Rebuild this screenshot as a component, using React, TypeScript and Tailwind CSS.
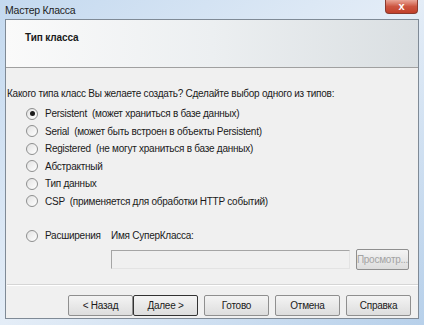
import React from 'react';

const FONT = { fontFamily: '"Liberation Sans", "Noto Sans", Arial, sans-serif' };

function Radio({ checked }: { checked?: boolean }) {
  return (
    <span className="inline-flex h-[12px] w-[12px] shrink-0 items-center justify-center rounded-full border border-[#8e8f8f] bg-gradient-to-br from-[#e2e2e2] to-[#ffffff]">
      {checked && <span className="h-[5px] w-[5px] rounded-full bg-[#1b1b1b]" />}
    </span>
  );
}

function Option({ label, note, checked }: { label: string; note?: string; checked?: boolean }) {
  return (
    <div className="flex h-[17.5px] items-center gap-[7px] pl-[19px]">
      <Radio checked={checked} />
      <span className="whitespace-pre">
        {label}
        {note && <span>{'  '}{note}</span>}
      </span>
    </div>
  );
}

function Btn({ children, focused, disabled, w = 'w-[65px]' }: { children: React.ReactNode; focused?: boolean; disabled?: boolean; w?: string }) {
  return (
    <button
      className={
        'flex h-[21px] shrink-0 items-center justify-center rounded-[2px] border bg-gradient-to-b from-[#f4f4f4] to-[#dddddd] ' +
        w +
        ' ' +
        (focused ? 'border-[#333333] ' : 'border-[#8f8f8f] ') +
        (disabled ? 'text-[#a3a3a3]' : 'text-[#1a1a1a]')
      }
    >
      {children}
    </button>
  );
}

export default function App() {
  return (
    <div
      className="flex h-[325px] w-[424px] flex-col overflow-hidden bg-gradient-to-br from-[#c4d9ef] via-[#e4edf7] to-[#b7d0ea] text-[10px] leading-[13px] tracking-[-0.25px] text-[#1a1a1a]"
      style={FONT}
    >
      {/* title bar */}
      <div className="flex h-[19px] shrink-0 items-start justify-between pl-[5px]">
        <span className="pt-[4px] text-[10.5px] text-[#1e1e1e]">Мастер Класса</span>
        <div className="mr-[6px] flex h-[14px] w-[33px] items-center justify-center rounded-b-[4px] border border-t-0 border-[#8a3a2e] bg-gradient-to-b from-[#e9a597] via-[#cc5540] to-[#c2402a] text-[11px] font-bold text-white">
          x
        </div>
      </div>

      {/* client area */}
      <div className="mx-[5px] flex h-[300px] shrink-0 flex-col border border-[#7f8a96] bg-[#f0f0f0]">
        {/* header */}
        <div className="flex h-[48px] shrink-0 border-b border-[#a0a0a0] bg-gradient-to-r from-[#fafafa] via-[#eceff1] to-[#dadfe2] pl-[19px] pt-[11px]">
          <span className="text-[10px] font-bold tracking-[-0.1px]">Тип класса</span>
        </div>

        {/* body */}
        <div className="flex flex-1 flex-col pl-[1px] pt-[19px]">
          <div className="h-[13px] whitespace-nowrap">Какого типа класс Вы желаете создать? Сделайте выбор одного из типов:</div>
          <div className="mt-[5px]">
            <Option label="Persistent" note="(может храниться в базе данных)" checked />
            <Option label="Serial" note="(может быть встроен в объекты Persistent)" />
            <Option label="Registered" note="(не могут храниться в базе данных)" />
            <Option label="Абстрактный" />
            <Option label="Тип данных" />
            <Option label="CSP" note="(применяется для обработки HTTP событий)" />
          </div>

          <div className="mt-[17px] flex h-[17.5px] items-center">
            <div className="flex w-[104px] shrink-0 items-center gap-[7px] pl-[19px]">
              <Radio />
              <span>Расширения</span>
            </div>
            <span>Имя СуперКласса:</span>
          </div>
          <div className="mt-[4px] flex items-center gap-[6px] pl-[104px]">
            <div className="h-[19px] w-[239px] border border-[#a5a5a5] border-b-[#e3e3e3] border-r-[#e3e3e3] bg-[#f0f0f0]" />
            <Btn disabled w="w-[53px]">Просмотр...</Btn>
          </div>

          <div className="mt-[14px] border-t border-b border-t-[#d5d5d5] border-b-white" />

          <div className="flex items-center pl-[61px] pt-[9px]">
            <Btn>&lt; Назад</Btn>
            <Btn focused>Далее &gt;</Btn>
            <div className="ml-[6px] flex gap-[6px]">
              <Btn>Готово</Btn>
              <Btn>Отмена</Btn>
              <Btn>Справка</Btn>
            </div>
          </div>
        </div>
      </div>
    </div>
  );
}
